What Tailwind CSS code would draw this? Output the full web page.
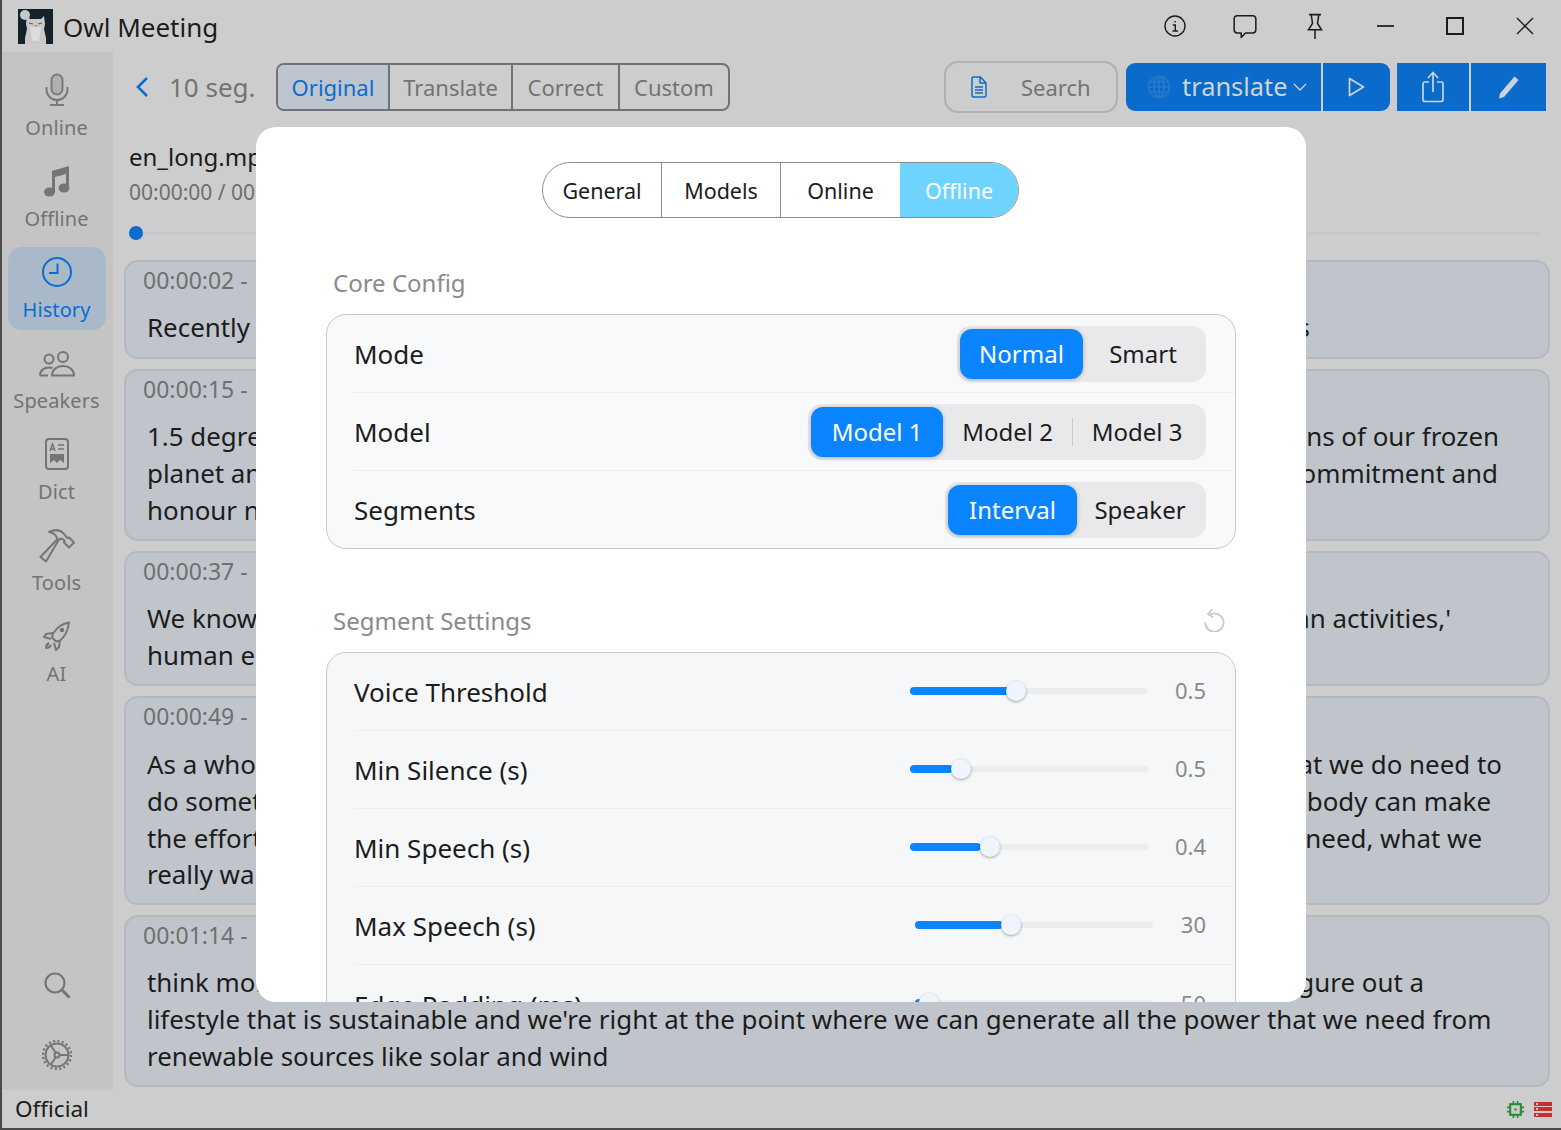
<!DOCTYPE html>
<html>
<head>
<meta charset="utf-8" />
<title>Owl Meeting</title>
<script src="https://cdn.jsdelivr.net/npm/@tailwindcss/browser@4"></script>
</head>
<body class="m-0">
<div class="relative w-[1561px] h-[1130px] overflow-hidden flex flex-col bg-[#cdcdcd] border-l-2 border-b-2 border-[#4a4a4a] text-[#1c1c1c] font-['Noto_Sans',sans-serif]">

  <!-- title bar -->
  <div class="h-[52px] shrink-0 flex items-center">
    <div class="ml-[16px] w-[35px] h-[35px] bg-[#14232b] overflow-hidden">
      <svg viewBox="0 0 35 35" class="w-[35px] h-[35px]">
        <circle cx="7" cy="6" r="5" fill="#c8c8c8"/>
        <path d="M9 7l3 3h11l3-3 1 8-1 5 2 9v6H7v-6l2-9-1-5z" fill="#c9c9c9"/>
        <path d="M12 18h11l-2 14h-7z" fill="#dcdcdc"/>
        <path d="M11 14l4 1M20 15l4-1" stroke="#555" stroke-width="1"/>
        <path d="M17 16h2l-1 2z" fill="#9a6a3a"/>
      </svg>
    </div>
    <div class="ml-[10px] mt-[1px] text-[26px] leading-none">Owl Meeting</div>
    <div class="ml-auto mr-[1px] flex">
      <button class="w-[70px] h-[52px] flex items-center justify-center">
        <svg viewBox="0 0 24 24" class="w-[24px] h-[24px]" fill="none" stroke="#1c1c1c" stroke-width="1.4"><circle cx="12" cy="12" r="10"/><path d="M12 7v1.6M9.8 11H12.3V17M9.5 17h5.4"/></svg>
      </button>
      <button class="w-[70px] h-[52px] flex items-center justify-center">
        <svg viewBox="0 0 24 24" class="w-[26px] h-[26px]" fill="none" stroke="#1c1c1c" stroke-width="1.4" stroke-linejoin="round"><path d="M5 2.5h14a3 3 0 0 1 3 3v10a3 3 0 0 1-3 3h-6.5L8.5 22.5v-4H5a3 3 0 0 1-3-3v-10a3 3 0 0 1 3-3z"/></svg>
      </button>
      <button class="w-[70px] h-[52px] flex items-center justify-center">
        <svg viewBox="0 0 24 24" class="w-[26px] h-[26px]" fill="none" stroke="#1c1c1c" stroke-width="1.4"><path d="M6.5 1.5h11M8.5 1.5l1.2 8L6 15.5h12l-3.7-6 1.2-8M12 15.5V24"/></svg>
      </button>
      <button class="w-[70px] h-[52px] flex items-center justify-center">
        <span class="block w-[17px] h-[2px] bg-[#333]"></span>
      </button>
      <button class="w-[70px] h-[52px] flex items-center justify-center">
        <span class="block w-[18px] h-[18px] border-2 border-[#1c1c1c]"></span>
      </button>
      <button class="w-[70px] h-[52px] flex items-center justify-center">
        <svg viewBox="0 0 18 18" class="w-[18px] h-[18px]" fill="none" stroke="#1c1c1c" stroke-width="1.4"><path d="M1 1l16 16M17 1L1 17"/></svg>
      </button>
    </div>
  </div>

  <div class="flex-1 flex min-h-0">
    <!-- sidebar -->
    <div class="w-[111px] shrink-0 bg-[#c4c4c4] flex flex-col items-center pt-[13px] pr-[2px] gap-[8px] text-[#737373] text-[20px] tracking-[0.1px]">
      <div class="w-[98px] h-[83px] flex flex-col items-center">
        <svg viewBox="0 0 24 34" class="w-[24px] h-[34px] mt-[8px]" fill="none" stroke="#7a7a7a" stroke-width="2"><rect x="6.5" y="1.5" width="11" height="20" rx="5.5" fill="#b0b0b0"/><path d="M1.500 14v2.500a10.500 10.500 0 0 0 21 0V14M12 27v5M5 32h14"/></svg>
        <div class="leading-none mt-[11px]">Online</div>
      </div>
      <div class="w-[98px] h-[83px] flex flex-col items-center">
        <svg viewBox="0 0 26 32" class="w-[26px] h-[32px] mt-[9px]" fill="#757575"><path d="M8 6l17-5v21h-3V9L11 12v15H8z"/><ellipse cx="5.500" cy="27" rx="5.500" ry="4.500"/><ellipse cx="20" cy="23" rx="5.500" ry="4.500"/></svg>
        <div class="leading-none mt-[12px]">Offline</div>
      </div>
      <div class="w-[98px] h-[83px] flex flex-col items-center bg-[#a9b9c9] rounded-[14px] text-[#0b6cd1]">
        <svg viewBox="0 0 30 30" class="w-[30px] h-[30px] mt-[10px]" fill="none" stroke="#0b6cd1" stroke-width="2"><circle cx="15" cy="15" r="14"/><path d="M15.500 6.500V16H7"/></svg>
        <div class="leading-none mt-[13px]">History</div>
      </div>
      <div class="w-[98px] h-[83px] flex flex-col items-center">
        <svg viewBox="0 0 36 26" class="w-[36px] h-[26px] mt-[13px]" fill="none" stroke="#757575" stroke-width="2"><circle cx="10" cy="8" r="4.500"/><circle cx="24" cy="6" r="5"/><path d="M1 24.500c0-5 4-8 9-8 1.500 0 2.500.2 3.500.6M13 24.500c0-6 5-9.500 11-9.500s11 3.500 11 9.500zM1 24.500h8"/></svg>
        <div class="leading-none mt-[14px]">Speakers</div>
      </div>
      <div class="w-[98px] h-[83px] flex flex-col items-center">
        <svg viewBox="0 0 24 32" class="w-[24px] h-[32px] mt-[9px]" fill="none" stroke="#757575" stroke-width="2"><rect x="1" y="1" width="22" height="30" rx="3"/><path d="M5 13l2.500-7 2.500 7M6 11h3M13 7h6M13 11h6" stroke-width="1.500"/><path d="M5 16h14v9l-4-3-3 3-3-3-4 3z" fill="#757575" stroke="none"/></svg>
        <div class="leading-none mt-[12px]">Dict</div>
      </div>
      <div class="w-[98px] h-[83px] flex flex-col items-center">
        <svg viewBox="0 0 36 34" class="w-[36px] h-[34px] mt-[9px]" fill="none" stroke="#757575" stroke-width="2" stroke-linejoin="round"><path d="M10 3c6-3 12-2 16 3l2 3 2-.5 5 5-5 5-5-5 .5-2-3-2-2.500 1L7 32.500 1.500 28 18.500 10l-1-2c-1.500-3-4-4.500-7.500-5z"/></svg>
        <div class="leading-none mt-[10px]">Tools</div>
      </div>
      <div class="w-[98px] h-[83px] flex flex-col items-center">
        <svg viewBox="0 0 28 30" class="w-[28px] h-[30px] mt-[10px]" fill="none" stroke="#757575" stroke-width="2" stroke-linejoin="round"><path d="M26 1.500c-7 1-12 5-16 11l-1 4 4 4 4-1c5-4 8-10 9-18zM10 12l-7 1-2 3 7 2M17 19l-1 7-3 3-2-7M6 22c-2 1-3 3-3 5 2 0 4-1 5-3"/><circle cx="19" cy="9" r="2.200" fill="#757575" stroke="none"/></svg>
        <div class="leading-none mt-[13px]">AI</div>
      </div>
      <div class="mt-auto w-[98px] h-[70px] flex items-center justify-center">
        <svg viewBox="0 0 26 26" class="w-[26px] h-[26px]" fill="none" stroke="#757575" stroke-width="2.200"><circle cx="11" cy="11" r="9.500"/><path d="M18 18l7 7" stroke-linecap="round" stroke-width="3"/></svg>
      </div>
      <div class="w-[98px] h-[70px] flex items-center justify-center -mt-[8px]">
        <svg viewBox="0 0 30 30" class="w-[30px] h-[30px]" fill="none" stroke="#757575" stroke-width="2"><circle cx="15" cy="15" r="11.500"/><circle cx="15" cy="15" r="14" stroke-width="2.500" stroke-dasharray="2 2.400"/><circle cx="15" cy="15" r="2.500"/><path d="M17.500 15H26M13.700 12.800L8.500 5M13.700 17.200L8.500 25"/></svg>
      </div>
    </div>

    <!-- content -->
    <div class="flex-1 min-w-0 pl-[11px] pr-[11px] flex flex-col">
      <div class="h-[72px] flex items-center shrink-0 -mt-[1px]">
        <svg viewBox="0 0 14 22" class="ml-[11px] w-[14px] h-[22px]" fill="none" stroke="#0b6cd1" stroke-width="2.600"><path d="M12 2L3 11l9 9"/></svg>
        <div class="ml-[20px] w-[85px] whitespace-nowrap text-[26px] text-[#737373]">10 seg.</div>
        <div class="ml-[22px] flex h-[48px] border-2 border-[#6f7278] rounded-[8px] overflow-hidden text-[22px] text-[#737373]">
          <div class="w-[112px] flex items-center justify-center bg-[#bdc5ce] text-[#0b6cd1] border-r-2 border-[#6f7278]">Original</div>
          <div class="w-[123px] flex items-center justify-center border-r-2 border-[#6f7278]">Translate</div>
          <div class="w-[107px] flex items-center justify-center border-r-2 border-[#6f7278]">Correct</div>
          <div class="flex-1 w-[108px] flex items-center justify-center">Custom</div>
        </div>
        <div class="ml-[214px] w-[174px] h-[52px] rounded-[14px] border-2 border-[#b0b0b0] flex items-center">
          <svg viewBox="0 0 16 22" class="ml-[24px] w-[18px] h-[22px]" fill="none" stroke="#0b6cd1" stroke-width="1.500" stroke-linejoin="round"><path d="M2.500 1h7L15 7v12.500a1.500 1.500 0 0 1-1.500 1.500h-11A1.500 1.500 0 0 1 1 19.500v-17A1.500 1.500 0 0 1 2.500 1zM9 1v6h6M4 11h8M4 14h8M4 17h8"/></svg>
          <span class="ml-[33px] text-[22px] text-[#737373]">Search</span>
        </div>
        <div class="ml-[8px] h-[48px] flex bg-[#0b6bcb] rounded-[9px] text-[#cdd3da]">
          <div class="w-[197px] flex items-center border-r-2 border-[#cdd3da]">
            <svg viewBox="0 0 24 24" class="ml-[21px] w-[24px] h-[24px]" fill="none" stroke="#2a7ac9" stroke-width="1.500"><circle cx="12" cy="12" r="10.500"/><ellipse cx="12" cy="12" rx="5" ry="10.500"/><path d="M12 1.500v21M1.500 12h21M3 7h18M3 17h18"/></svg>
            <span class="ml-[11px] text-[25.400px] leading-none">translate</span>
            <svg viewBox="0 0 14 8" class="ml-[5px] w-[14px] h-[8px]" fill="none" stroke="#cdd3da" stroke-width="1.300"><path d="M1 1l6 6 6-6"/></svg>
          </div>
          <div class="w-[67px] flex items-center justify-center">
            <svg viewBox="0 0 16 20" class="w-[17px] h-[20px]" fill="none" stroke="#cdd3da" stroke-width="1.700" stroke-linejoin="round"><path d="M1 1.500L15 10 1 18.500z"/></svg>
          </div>
        </div>
        <div class="ml-[7px] h-[48px] flex bg-[#0b6bcb] text-[#cdd3da]">
          <div class="w-[74px] flex items-center justify-center border-r-2 border-[#cdd3da]">
            <svg viewBox="0 0 22 32" class="w-[22px] h-[32px]" fill="none" stroke="#cdd3da" stroke-width="1.700" stroke-linejoin="round"><path d="M7 11H3a2 2 0 0 0-2 2v15.500a2 2 0 0 0 2 2h16a2 2 0 0 0 2-2V13a2 2 0 0 0-2-2h-4M11 21V2M6 7l5-5.500L16 7"/></svg>
          </div>
          <div class="w-[75px] flex items-center justify-center">
            <svg viewBox="0 0 22 24" class="w-[22px] h-[24px]" fill="#cdd3da"><path d="M16.500 1.500l4 3.500L6 22l-5 1.500 1-5z"/></svg>
          </div>
        </div>
      </div>

      <div class="shrink-0 pl-[5px] h-[137px] pt-[17px]">
        <div class="text-[24px] leading-[34px]">en_long.mp3</div>
        <div class="text-[21px] leading-[28px] text-[#6f6f6f] mt-[4px]">00:00:00 / 00:05:12</div>
        <div class="relative h-[14px] mt-[20px] mr-[10px] flex items-center">
          <div class="w-full h-[3px] bg-[#c3c8ce]"></div>
          <div class="absolute left-0 w-[14px] h-[14px] rounded-full bg-[#0b6cd1]"></div>
        </div>
      </div>

      <div class="flex flex-col gap-[10px] text-[25.900px] leading-[36.800px]">
        <div class="h-[99px] rounded-[14px] bg-[#c0c5cc] border-2 border-[#b3b8c1] px-[21px]">
          <div class="-ml-[4px] text-[23px] leading-[30px] text-[#6f6f6f] mt-[3px]">00:00:02 -&nbsp;&nbsp;00:00:15</div>
          <div class="flex mt-[14px]"><span>Recently</span><span class="ml-auto mr-[217px]">s</span></div>
        </div>
        <div class="h-[172px] rounded-[14px] bg-[#c0c5cc] border-2 border-[#b3b8c1] px-[21px]">
          <div class="-ml-[4px] text-[23px] leading-[30px] text-[#6f6f6f] mt-[3px]">00:00:15 -&nbsp;&nbsp;00:00:37</div>
          <div class="flex mt-[14px]"><span>1.5 degrees</span><span class="ml-auto mr-[28px]">tons of our frozen</span></div>
          <div class="flex"><span>planet and</span><span class="ml-auto mr-[29px]">commitment and</span></div>
          <div class="flex"><span>honour now</span></div>
        </div>
        <div class="h-[135px] rounded-[14px] bg-[#c0c5cc] border-2 border-[#b3b8c1] px-[21px]">
          <div class="-ml-[4px] text-[23px] leading-[30px] text-[#6f6f6f] mt-[3px]">00:00:37 -&nbsp;&nbsp;00:00:49</div>
          <div class="flex mt-[14px]"><span>We know</span><span class="ml-auto mr-[76px]">human activities,'</span></div>
          <div class="flex"><span>human era</span></div>
        </div>
        <div class="h-[209px] rounded-[14px] bg-[#c0c5cc] border-2 border-[#b3b8c1] px-[21px]">
          <div class="-ml-[4px] text-[23px] leading-[30px] text-[#6f6f6f] mt-[3px]">00:00:49 -&nbsp;&nbsp;00:01:14</div>
          <div class="flex mt-[15px]"><span>As a whole</span><span class="ml-auto mr-[25px]">that we do need to</span></div>
          <div class="flex"><span>do something</span><span class="ml-auto mr-[36px]">somebody can make</span></div>
          <div class="flex"><span>the effort</span><span class="ml-auto mr-[45px]">we need, what we</span></div>
          <div class="flex"><span>really want</span></div>
        </div>
        <div class="h-[172px] rounded-[14px] bg-[#c0c5cc] border-2 border-[#b3b8c1] px-[21px]">
          <div class="-ml-[4px] text-[23px] leading-[30px] text-[#6f6f6f] mt-[3px]">00:01:14 -&nbsp;&nbsp;00:01:40</div>
          <div class="flex mt-[14px]"><span>think more</span><span class="ml-auto mr-[103px]">figure out a</span></div>
          <div class="whitespace-nowrap">lifestyle that is sustainable and we're right at the point where we can generate all the power that we need from</div>
          <div class="whitespace-nowrap">renewable sources like solar and wind</div>
        </div>
      </div>
    </div>
  </div>

  <!-- status bar -->
  <div class="h-[38px] shrink-0 flex items-center pl-[13px] pr-[9px]">
    <span class="text-[22.500px] leading-none">Official</span>
    <svg viewBox="0 0 16 16" class="ml-auto w-[17px] h-[17px]" fill="none" stroke="#2f8a3a" stroke-width="2"><rect x="3" y="3" width="10" height="10"/><rect x="7" y="7" width="2" height="2" fill="#2f8a3a" stroke="none"/><path d="M6 0v3M10 0v3M6 13v3M10 13v3M0 6h3M0 10h3M13 6h3M13 10h3" stroke-width="1.500"/></svg>
    <div class="ml-[10px] w-[18px] flex flex-col gap-[1.500px]">
      <span class="flex items-center pl-[2px] h-[4px] bg-[#c5302c]"><span class="block w-[2px] h-[2px] bg-white/70"></span></span>
      <span class="flex items-center pl-[2px] h-[4px] bg-[#c5302c]"><span class="block w-[2px] h-[2px] bg-white/70"></span></span>
      <span class="flex items-center pl-[2px] h-[4px] bg-[#c5302c]"><span class="block w-[2px] h-[2px] bg-white/70"></span></span>
    </div>
  </div>

  <!-- settings dialog -->
  <div class="absolute left-[254px] top-[127px] w-[1050px] h-[875px] bg-white rounded-[20px] overflow-hidden">
    <div class="flex justify-center mt-[35px] pr-[1px]">
      <div class="flex h-[56px] w-[477px] border border-[#8c8c8c] rounded-full overflow-hidden text-[21.500px]">
        <div class="w-[119px] pt-[3px] flex items-center justify-center border-r border-[#8c8c8c]">General</div>
        <div class="w-[119px] pt-[3px] flex items-center justify-center border-r border-[#8c8c8c]">Models</div>
        <div class="w-[119px] pt-[3px] flex items-center justify-center">Online</div>
        <div class="flex-1 pt-[3px] flex items-center justify-center bg-[#6fd3ff] text-white">Offline</div>
      </div>
    </div>

    <div class="mx-[70px] mt-[51px]">
      <div class="pl-[7px] h-[28px] leading-[28px] text-[24px] text-[#8a8a8a]">Core Config</div>
      <div class="mt-[17px] rounded-[20px] border border-[#c8c8cc] bg-[#f8f9fb] overflow-hidden text-[26px]">
        <div class="h-[78px] ml-[27px] pr-[29px] flex items-center border-b border-[#eceef1]">
          <span class="mt-[2px]">Mode</span>
          <div class="ml-auto flex h-[56px] p-[3px] bg-[#e9e9eb] rounded-[14px] text-[24px]">
            <div class="w-[123px] flex items-center justify-center rounded-[12px] bg-[#0a84ff] text-white shadow-[0_1px_4px_rgba(0,0,0,0.25)]">Normal</div>
            <div class="w-[120px] flex items-center justify-center">Smart</div>
          </div>
        </div>
        <div class="h-[78px] ml-[27px] pr-[29px] flex items-center border-b border-[#eceef1]">
          <span class="mt-[2px]">Model</span>
          <div class="ml-auto flex h-[56px] p-[3px] bg-[#e9e9eb] rounded-[14px] text-[24px]">
            <div class="w-[132px] flex items-center justify-center rounded-[12px] bg-[#0a84ff] text-white shadow-[0_1px_4px_rgba(0,0,0,0.25)]">Model 1</div>
            <div class="w-[129px] flex items-center justify-center">Model 2</div>
            <div class="my-[11px] w-px bg-[#c9c9cc]"></div>
            <div class="w-[130px] flex items-center justify-center pr-[2px]">Model 3</div>
          </div>
        </div>
        <div class="h-[77px] ml-[27px] pr-[29px] flex items-center">
          <span class="mt-[2px]">Segments</span>
          <div class="ml-auto flex h-[56px] p-[3px] bg-[#e9e9eb] rounded-[14px] text-[24px]">
            <div class="w-[129px] flex items-center justify-center rounded-[12px] bg-[#0a84ff] text-white shadow-[0_1px_4px_rgba(0,0,0,0.25)]">Interval</div>
            <div class="w-[126px] flex items-center justify-center">Speaker</div>
          </div>
        </div>
      </div>

      <div class="mt-[58px] pl-[7px] pr-[11px] h-[28px] leading-[28px] text-[24px] text-[#8a8a8a] flex items-center">
        <span>Segment Settings</span>
        <svg viewBox="0 0 24 26" class="ml-auto w-[22px] h-[24px] -mt-[2px]" fill="none" stroke="#c9c9c9" stroke-width="2"><path d="M7 7.500a10 10 0 1 1-4.500 8M10 1L5.500 6.500 11 10"/></svg>
      </div>
      <div class="mt-[17px] rounded-t-[20px] border border-[#c8c8cc] bg-[#f6f7f9] text-[26px]">
        <div class="h-[78px] ml-[27px] pr-[29px] flex items-center border-b border-[#eceef1]">
          <span class="mt-[2px]">Voice Threshold</span>
          <div class="ml-auto mb-[2px] relative w-[238px] h-[6px] rounded-full bg-[#ebecee] mr-[27px]">
            <div class="absolute -top-px left-0 h-[8px] rounded-full bg-[#0a84ff]" style="width:42%"></div>
            <div class="absolute top-[-7px] left-[96px] w-[20px] h-[20px] rounded-full bg-[#eff5fd] shadow-[0_1px_3px_rgba(0,0,0,0.35)]"></div>
          </div>
          <span class="mb-[2px] text-[22px] text-[#8a8a8a]">0.5</span>
        </div>
        <div class="h-[78px] ml-[27px] pr-[29px] flex items-center border-b border-[#eceef1]">
          <span class="mt-[2px]">Min Silence (s)</span>
          <div class="ml-auto mb-[2px] relative w-[238px] h-[6px] rounded-full bg-[#ebecee] mr-[27px]">
            <div class="absolute -top-px left-0 h-[8px] rounded-full bg-[#0a84ff]" style="width:18%"></div>
            <div class="absolute top-[-7px] left-[41px] w-[20px] h-[20px] rounded-full bg-[#eff5fd] shadow-[0_1px_3px_rgba(0,0,0,0.35)]"></div>
          </div>
          <span class="mb-[2px] text-[22px] text-[#8a8a8a]">0.5</span>
        </div>
        <div class="h-[78px] ml-[27px] pr-[29px] flex items-center border-b border-[#eceef1]">
          <span class="mt-[2px]">Min Speech (s)</span>
          <div class="ml-auto mb-[2px] relative w-[238px] h-[6px] rounded-full bg-[#ebecee] mr-[27px]">
            <div class="absolute -top-px left-0 h-[8px] rounded-full bg-[#0a84ff]" style="width:30%"></div>
            <div class="absolute top-[-7px] left-[70px] w-[20px] h-[20px] rounded-full bg-[#eff5fd] shadow-[0_1px_3px_rgba(0,0,0,0.35)]"></div>
          </div>
          <span class="mb-[2px] text-[22px] text-[#8a8a8a]">0.4</span>
        </div>
        <div class="h-[78px] ml-[27px] pr-[29px] flex items-center border-b border-[#eceef1]">
          <span class="mt-[2px]">Max Speech (s)</span>
          <div class="ml-auto mb-[2px] relative w-[238px] h-[6px] rounded-full bg-[#ebecee] mr-[28px]">
            <div class="absolute -top-px left-0 h-[8px] rounded-full bg-[#0a84ff]" style="width:37%"></div>
            <div class="absolute top-[-7px] left-[86px] w-[20px] h-[20px] rounded-full bg-[#eff5fd] shadow-[0_1px_3px_rgba(0,0,0,0.35)]"></div>
          </div>
          <span class="mb-[2px] text-[22px] text-[#8a8a8a]">30</span>
        </div>
        <div class="h-[78px] ml-[27px] pr-[29px] flex items-center">
          <span class="mt-[2px]">Edge Padding (ms)</span>
          <div class="ml-auto mb-[2px] relative w-[238px] h-[6px] rounded-full bg-[#ebecee] mr-[28px]">
            <div class="absolute -top-px left-0 h-[8px] rounded-full bg-[#0a84ff]" style="width:5%"></div>
            <div class="absolute top-[-7px] left-[4px] w-[20px] h-[20px] rounded-full bg-[#eff5fd] shadow-[0_1px_3px_rgba(0,0,0,0.35)]"></div>
          </div>
          <span class="mb-[2px] text-[22px] text-[#8a8a8a]">50</span>
        </div>
      </div>
    </div>
  </div>
</div>
</body>
</html>
